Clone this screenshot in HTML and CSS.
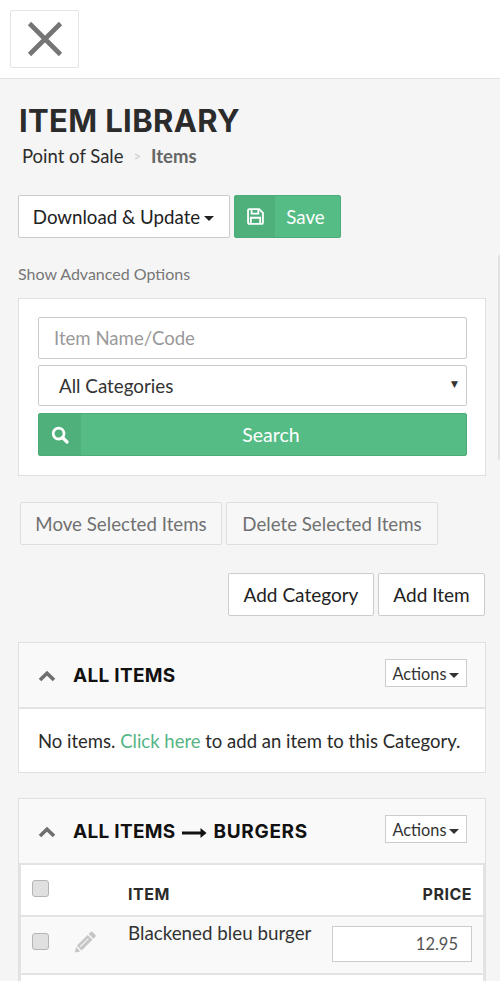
FILE: index.html
```html
<!DOCTYPE html>
<html lang="en">
<head>
<meta charset="utf-8">
<title>Item Library</title>
<link rel="stylesheet" href="styles.css">
</head>
<body>
<header class="topbar">
  <button class="close-btn" aria-label="Close">
    <svg width="36" height="36" viewBox="0 0 36 36"><path d="M2.5 2.5 33.5 33.5M33.5 2.5 2.5 33.5" stroke="#757575" stroke-width="4.6" fill="none"/></svg>
  </button>
</header>
<main class="page">
  <h1 class="title">ITEM LIBRARY</h1>
  <nav class="crumbs"><span>Point of Sale</span><span class="sep">&gt;</span><b>Items</b></nav>
  <div class="tools">
    <button class="btn btn-download">Download &amp; Update<i class="caret"></i></button>
    <button class="btn-green btn-save">
      <span class="ico">
        <svg width="17" height="17" viewBox="0 0 16 16" fill="none" stroke="#fff" stroke-width="1.7"><path d="M1 2.2C1 1.5 1.5 1 2.2 1H11.5L15 4.5V13.8C15 14.5 14.5 15 13.8 15H2.2C1.5 15 1 14.5 1 13.8Z"/><path d="M4.3 1.2V5.3H10.7V1.2M3.6 14.8V9.2H12.4V14.8"/></svg>
      </span>
      <span class="lbl">Save</span>
    </button>
  </div>
  <a class="advanced">Show Advanced Options</a>
  <section class="card search">
    <div class="field placeholder">Item Name/Code</div>
    <div class="field select">All Categories<span class="arrow">▼</span></div>
    <button class="btn-green btn-search">
      <span class="ico">
        <svg width="18" height="18" viewBox="0 0 18 18" fill="none" stroke="#fff"><circle cx="7.6" cy="7.6" r="5.4" stroke-width="2.8"/><path d="M11.5 11.5 16 16" stroke-width="3.2" stroke-linecap="round"/></svg>
      </span>
      <span class="lbl">Search</span>
    </button>
  </section>
  <div class="bulk">
    <button class="btn-muted btn-move">Move Selected Items</button>
    <button class="btn-muted btn-delete">Delete Selected Items</button>
  </div>
  <div class="adds">
    <button class="btn btn-cat">Add Category</button>
    <button class="btn btn-item">Add Item</button>
  </div>
  <section class="panel first">
    <div class="panel-head">
      <svg class="chev" width="18" height="12" viewBox="0 0 18 12" fill="none"><path d="M2 10 9 3.2 16 10" stroke="#6f6f6f" stroke-width="3.6"/></svg>
      <h2>ALL ITEMS</h2>
      <button class="actions">Actions<i class="caret"></i></button>
    </div>
    <p class="empty">No items. <a>Click here</a> to add an item to this Category.</p>
  </section>
  <section class="panel second">
    <div class="panel-head">
      <svg class="chev" width="18" height="12" viewBox="0 0 18 12" fill="none"><path d="M2 10 9 3.2 16 10" stroke="#6f6f6f" stroke-width="3.6"/></svg>
      <h2>ALL ITEMS<svg class="long-arrow" width="25" height="12" viewBox="0 0 25 12"><path d="M0 6H21" stroke="#111" stroke-width="3"/><path d="M18.5 1 24.5 6 18.5 11Z" fill="#111"/></svg><span class="leaf">BURGERS</span></h2>
      <button class="actions">Actions<i class="caret"></i></button>
    </div>
    <div class="table">
      <div class="row head">
        <span class="check"></span>
        <span class="col-item">ITEM</span>
        <span class="col-price">PRICE</span>
      </div>
      <div class="row item">
        <span class="check"></span>
        <svg class="pencil" width="23" height="23" viewBox="0 0 23 23" fill="#c6c6c6"><path d="M16.4 2.2C17.2 1.4 18 1.4 18.8 2.2L21.2 4.6C22 5.4 22 6.2 21.2 7L19.4 8.8 14.6 4Z"/><path d="M13.6 5 18.4 9.8 7.6 20.6 2.8 15.8ZM14 8.2 5.6 16.4 6.4 17.2 14.8 9Z" fill-rule="evenodd"/><path d="M2 17 6.4 21.4 .8 22.6Z"/></svg>
        <span class="name">Blackened bleu burger</span>
        <span class="price">12.95</span>
      </div>
      <div class="row blank"></div>
    </div>
  </section>
  <div class="scrollbar"></div>
</main>
</body>
</html>
```

FILE: styles.css
```css
* { box-sizing: border-box; }
html, body { margin: 0; height: 981px; overflow: hidden; }
body { background: #f5f5f5; font-family: Lato, "Open Sans", sans-serif; color: #222; }
button { font-family: inherit; cursor: pointer; padding: 0; }

.topbar { height: 79px; background: #fff; border-bottom: 1px solid #e2e2e2; padding: 10px; }
.close-btn { width: 69px; height: 58px; background: #fff; border: 1px solid #e4e4e4; border-radius: 2px; display: flex; align-items: center; justify-content: center; }

.page { position: relative; padding: 0 14px 0 19px; height: 902px; overflow: hidden; }
.title { margin: 0; padding-top: 23px; font-family: Inter, "Liberation Sans", sans-serif; font-weight: 700; font-size: 31px; line-height: 37px; color: #2b2b2b; letter-spacing: .35px; }
.crumbs { margin: 6px 0 0 3px; font-size: 18.5px; line-height: 22px; color: #2c2c2c; display: flex; align-items: center; }
.crumbs .sep { margin: 0 10px; color: #c9c9c9; font-size: 13px; }
.crumbs b { color: #666; font-weight: 700; }

.tools { display: flex; gap: 4px; margin: 28px 0 0 -1px; }
.btn { height: 43px; background: #fff; border: 1px solid #ccc; border-radius: 2px; font-size: 18.7px; color: #222; }
.btn-download { width: 212px; padding-right: 1px; }
.caret { display: inline-block; width: 0; height: 0; margin-left: 4px; vertical-align: middle; border-top: 5px solid #222; border-left: 5px solid transparent; border-right: 5px solid transparent; }
.btn-green { display: flex; align-items: stretch; background: #55bc85; border: 1px solid #4dab79; border-radius: 2px; color: #fff; font-size: 18.7px; }
.btn-green .ico { display: flex; align-items: center; justify-content: center; background: #4fb07c; }
.btn-green .lbl { flex: 1; display: flex; align-items: center; justify-content: center; }
.btn-save { width: 107px; height: 43px; }
.btn-save .ico { width: 40px; }
.btn-save .lbl { padding-right: 4px; }
.advanced { display: block; margin-top: 26px; margin-left: -1px; font-size: 16px; line-height: 19px; color: #777; }

.card { background: #fff; border: 1px solid #e0e0e0; }
.search { margin: 15px 0 0 -1px; width: 468px; height: 178px; padding: 18px 18px 18px 19px; }
.field { height: 42px; background: #fff; border: 1px solid #ccc; border-radius: 2px; font-size: 18.6px; display: flex; align-items: center; }
.placeholder { padding-left: 15px; color: #999; }
.select { position: relative; height: 41px; margin-top: 6px; padding-left: 20px; color: #333; font-size: 18.8px; }
.arrow { position: absolute; right: 8px; top: 13px; font-size: 9px; line-height: 10px; color: #333; font-family: "DejaVu Sans", sans-serif; }
.btn-search { width: 100%; height: 43px; margin-top: 7px; font-size: 19.5px; }
.btn-search .ico { width: 42px; padding-right: 1px; }
.btn-search .lbl { padding-right: 5px; }

.bulk { display: flex; gap: 4px; margin: 26px 0 0 1px; }
.btn-muted { height: 43px; background: #f7f7f7; border: 1px solid #dedede; border-radius: 2px; font-size: 18.7px; color: #707070; }
.btn-move { width: 202px; }
.btn-delete { width: 212px; }
.adds { display: flex; justify-content: flex-end; gap: 4px; margin: 28px 1px 0 0; }
.btn-cat { width: 146px; font-size: 19px; }
.btn-item { width: 107px; font-size: 19px; }

.panel { width: 468px; margin-left: -1px; background: #fff; border: 1px solid #e0e0e0; }
.first { margin-top: 26px; height: 131px; }
.second { margin-top: 25px; height: 200px; }
.panel-head { height: 66px; background: #f9f9f9; border-bottom: 2px solid #e3e3e3; display: flex; align-items: center; padding: 0 18px 0 19px; }
.chev { flex: none; margin: 1px 17px 0 0; }
.panel-head h2 { flex: 1; margin: 0; font-family: Inter, "Liberation Sans", sans-serif; font-weight: 700; font-size: 19px; color: #111; letter-spacing: .3px; white-space: nowrap; }
.long-arrow { vertical-align: -1px; margin: 0 7px 0 6px; }
.leaf { letter-spacing: .65px; }
.actions { flex: none; width: 82px; height: 28px; background: #fff; border: 1px solid #ccc; font-size: 16.3px; color: #333; margin-top: -4px; }
.actions .caret { margin-left: 3px; border-top-color: #333; }
.empty { margin: 0; padding: 20px 19px; font-size: 18.5px; line-height: 24px; color: #2a2a2a; white-space: nowrap; }
.empty a { color: #55b586; }

.row { position: relative; border: solid #e3e3e3; border-width: 0 2px 2px; }
.head { height: 52px; background: #fff; }
.item { height: 58px; background: #f9f9f9; }
.blank { height: 30px; background: #fff; }
.check { position: absolute; left: 11px; width: 17px; height: 17px; background: #e0e0e0; border: 1px solid #b5b5b5; border-radius: 3px; }
.head .check { top: 15px; }
.item .check { top: 16px; }
.col-item, .col-price { position: absolute; top: 20px; font-family: Inter, "Liberation Sans", sans-serif; font-weight: 700; font-size: 16px; line-height: 18px; color: #2b2b2b; letter-spacing: .5px; }
.col-item { left: 107px; }
.col-price { right: 11px; }
.pencil { position: absolute; left: 53px; top: 13px; }
.name { position: absolute; left: 107px; top: 4px; font-size: 18.8px; line-height: 24px; color: #333; }
.price { position: absolute; right: 11px; top: 9px; width: 140px; height: 36px; background: #fff; border: 1px solid #ccc; font-size: 16.5px; line-height: 34px; text-align: right; padding-right: 13px; color: #555; }
.scrollbar { position: absolute; right: 0; top: 176px; width: 2px; height: 205px; background: #e2e2e2; border-radius: 1px; }
```
